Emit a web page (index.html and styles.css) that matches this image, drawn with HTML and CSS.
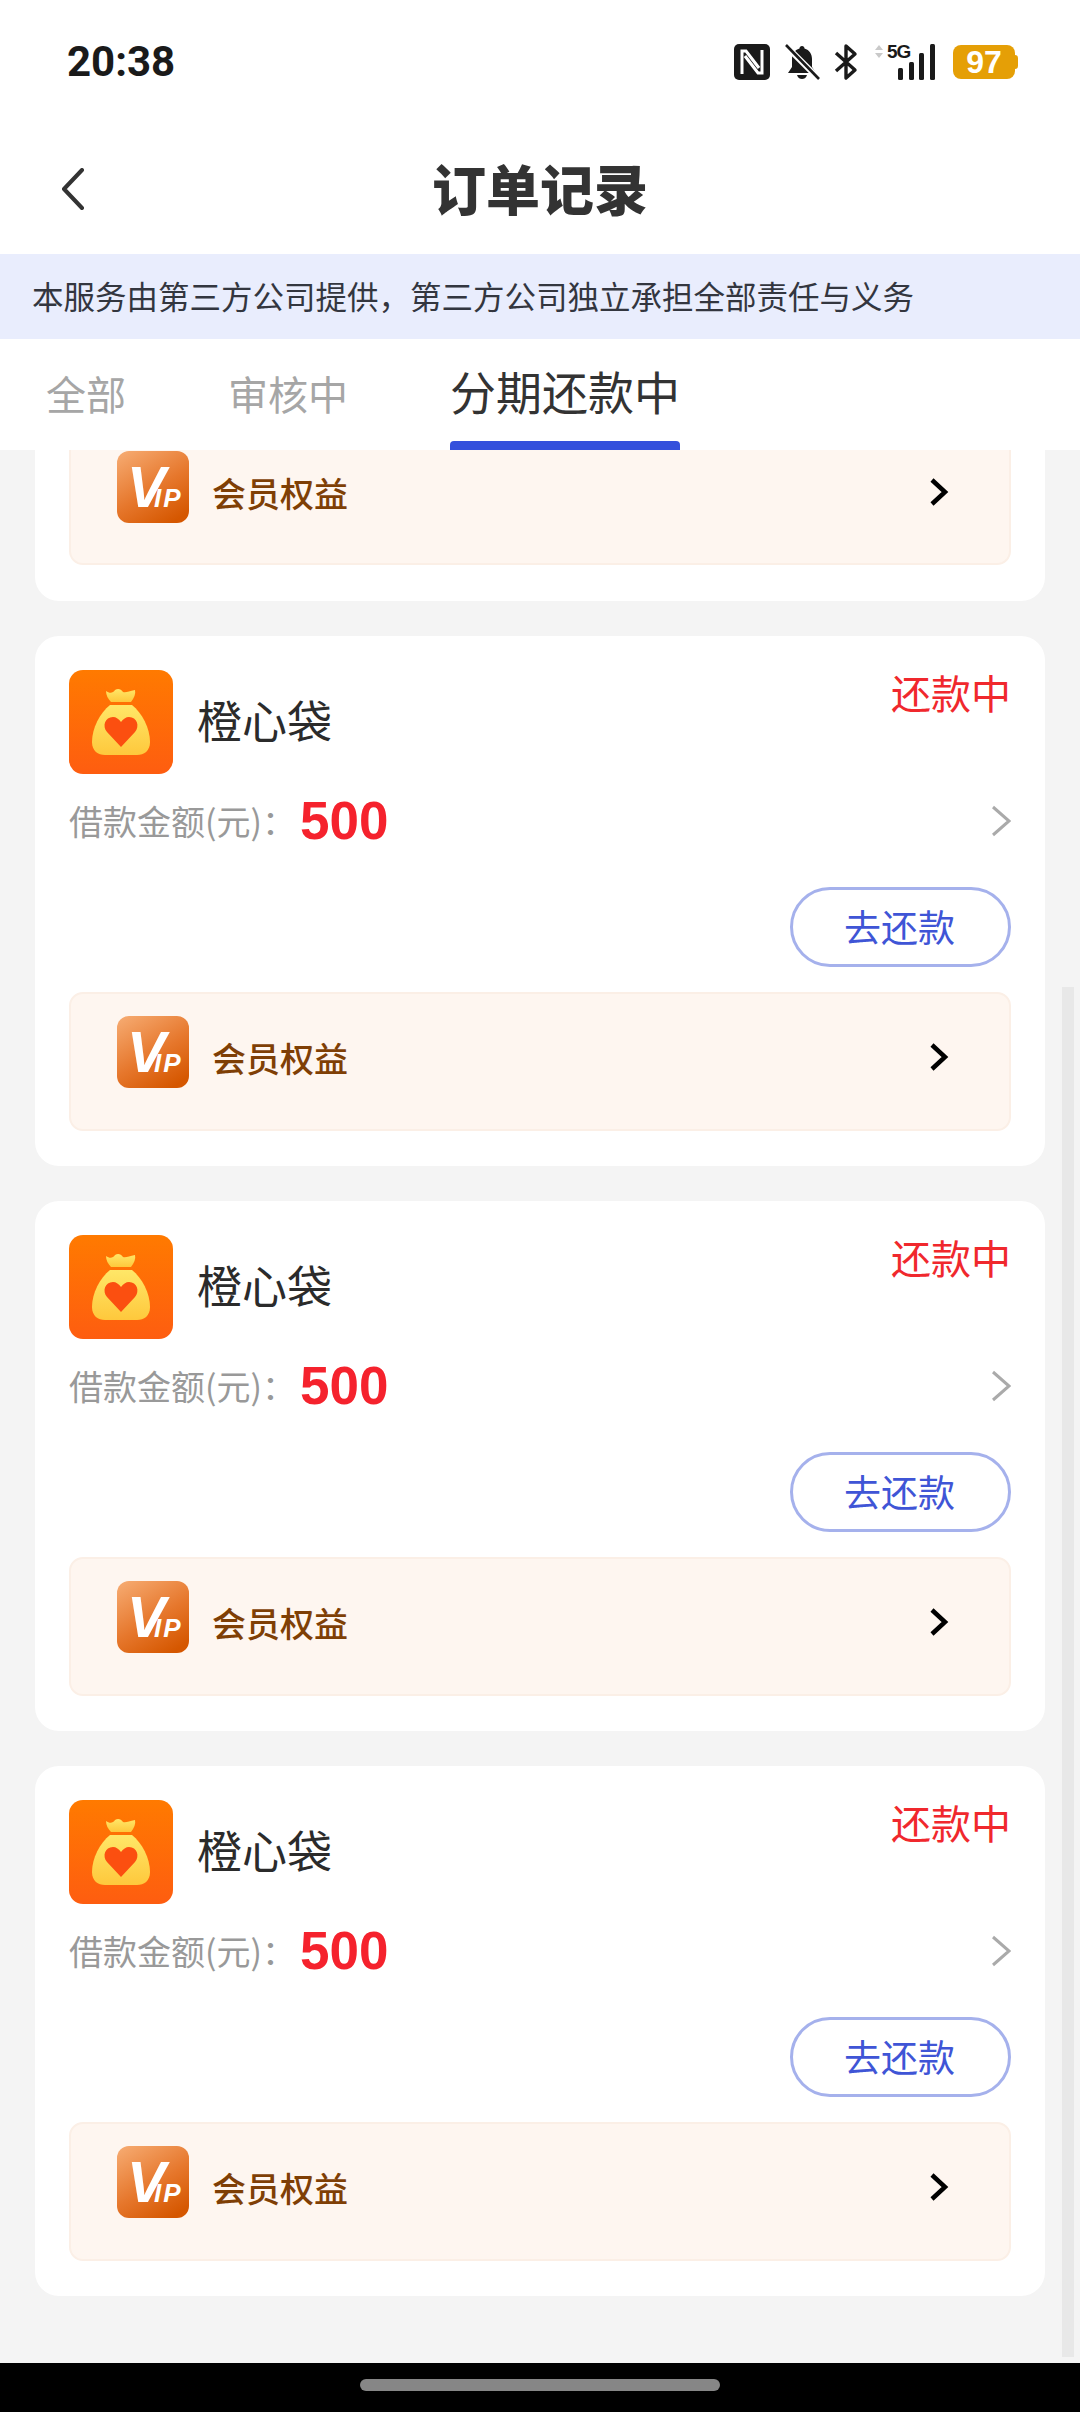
FILE: index.html
```html
<!DOCTYPE html>
<html lang="zh-CN">
  <head>
    <meta charset="UTF-8" />
    <meta name="viewport" content="width=device-width, initial-scale=1.0" />
    <title>订单记录</title>
    <link rel="stylesheet" href="styles.css">
  </head>
  <body>
    <svg class="sprite" width="0" height="0">
      <defs>
        <linearGradient id="bagBg" x1="0" y1="0" x2="0" y2="1">
          <stop offset="0" stop-color="#ff7a00" />
          <stop offset="1" stop-color="#fe5d10" />
        </linearGradient>
        <linearGradient id="bagBody" x1="0" y1="0" x2="0" y2="1">
          <stop offset="0" stop-color="#ffe768" />
          <stop offset="1" stop-color="#fec83c" />
        </linearGradient>
        <linearGradient id="vipBg" x1="0.15" y1="0" x2="0.75" y2="1">
          <stop offset="0" stop-color="#f5a76c" />
          <stop offset="0.55" stop-color="#e6772c" />
          <stop offset="1" stop-color="#d55700" />
        </linearGradient>
        <symbol id="bag" viewBox="0 0 104 104">
          <rect width="104" height="104" rx="14" fill="url(#bagBg)" />
          <path d="M37 21C41 24 44 23 46 20C49 18 52 19 54 22C57 23 60 21 66 20C67 24 65 28 62 32H42C39 29 37 25 37 21Z" fill="url(#bagBody)" />
          <path d="M41 35H63C73 43 81 58 81 72C81 81 75 85 68 85H36C29 85 23 81 23 72C23 58 31 43 41 35Z" fill="url(#bagBody)" />
          <path d="M52 77L38 62C33 56 36 47 44 47C47 47 50 49 52 52C54 49 57 47 60 47C68 47 71 56 66 62Z" fill="#fb4f10" />
        </symbol>
      </defs>
    </svg>

    <div class="app">
      <div class="status-bar">
        <span class="time">20:38</span>
        <div class="status-icons">
          <svg class="ic-nfc" width="36" height="36" viewBox="0 0 36 36">
            <rect width="36" height="36" rx="5" fill="#1a1a1a" />
            <path d="M8 30V7H12L25 24M28 6V29H24L11 12" fill="none" stroke="#fff" stroke-width="3" />
          </svg>
          <svg class="ic-bell" width="36" height="36" viewBox="0 0 36 36">
            <path d="M18 2C19.500 2 20.500 3 20.500 4.500C25.500 6 28 10 28 15V23L32 29H4L8 23V15C8 10 10.500 6 15.500 4.500C15.500 3 16.500 2 18 2Z" fill="#1a1a1a" />
            <path d="M13 31H23C22 34 20 35 18 35C16 35 14 34 13 31Z" fill="#1a1a1a" />
            <path d="M1 1L35 35" stroke="#fff" stroke-width="6" />
            <path d="M2 1L35 35" stroke="#1a1a1a" stroke-width="2.600" />
          </svg>
          <svg class="ic-bt" width="24" height="38" viewBox="0 0 24 38">
            <path d="M2 10L21 27L12 35V3L21 11L2 28" fill="none" stroke="#1a1a1a" stroke-width="3.400" stroke-linejoin="round" />
          </svg>
          <svg class="ic-signal" width="62" height="42" viewBox="0 -6 62 42">
            <path d="M5 1L9 6H1ZM5 14L1 9H9Z" fill="#c9c9c9" />
            <text class="net-label" x="13" y="14">5G</text>
            <rect x="24" y="24" width="5" height="12" rx="1.500" fill="#1a1a1a" />
            <rect x="35" y="18" width="5" height="18" rx="1.500" fill="#1a1a1a" />
            <rect x="45" y="9" width="5" height="27" rx="1.500" fill="#1a1a1a" />
            <rect x="56" y="0" width="5" height="36" rx="1.500" fill="#1a1a1a" />
          </svg>
          <div class="battery">97</div>
        </div>
      </div>

      <header class="title-bar">
        <svg class="back" width="24" height="42" viewBox="0 0 24 42">
          <path d="M21 2L3 21L21 40" fill="none" stroke="#333" stroke-width="4" stroke-linecap="round" stroke-linejoin="round" />
        </svg>
        <h1>订单记录</h1>
      </header>

      <p class="notice">本服务由第三方公司提供，第三方公司独立承担全部责任与义务</p>

      <nav class="tabs">
        <a class="tab">全部</a>
        <a class="tab">审核中</a>
        <a class="tab tab-active">分期还款中</a>
      </nav>

      <main class="list">
        <!-- scrolled: only the end of this card still shows under the tabs -->
        <section class="card card-cut">
          <div class="perk">
            <svg class="vip" width="72" height="72" viewBox="0 0 72 72">
              <rect width="72" height="72" rx="12" fill="url(#vipBg)" />
              <text class="vip-mark" x="10" y="56"><tspan class="vip-v">V</tspan><tspan class="vip-ip" x="37">IP</tspan></text>
            </svg>
            <span class="perk-name">会员权益</span>
            <svg class="go" width="20" height="30" viewBox="0 0 20 30"><path d="M3 3L16 15L3 27" /></svg>
          </div>
        </section>

        <section class="card">
          <div class="card-head">
            <svg class="bag" width="104" height="104"><use href="#bag" /></svg>
            <span class="name">橙心袋</span>
            <span class="state">还款中</span>
          </div>
          <div class="amount-row">
            <span class="amount-label">借款金额(元)：</span>
            <span class="amount">500</span>
            <svg class="more" width="20" height="32" viewBox="0 0 20 32"><path d="M2 2L18 16L2 30" /></svg>
          </div>
          <div class="actions"><button class="pay">去还款</button></div>
          <div class="perk">
            <svg class="vip" width="72" height="72" viewBox="0 0 72 72">
              <rect width="72" height="72" rx="12" fill="url(#vipBg)" />
              <text class="vip-mark" x="10" y="56"><tspan class="vip-v">V</tspan><tspan class="vip-ip" x="37">IP</tspan></text>
            </svg>
            <span class="perk-name">会员权益</span>
            <svg class="go" width="20" height="30" viewBox="0 0 20 30"><path d="M3 3L16 15L3 27" /></svg>
          </div>
        </section>

        <section class="card">
          <div class="card-head">
            <svg class="bag" width="104" height="104"><use href="#bag" /></svg>
            <span class="name">橙心袋</span>
            <span class="state">还款中</span>
          </div>
          <div class="amount-row">
            <span class="amount-label">借款金额(元)：</span>
            <span class="amount">500</span>
            <svg class="more" width="20" height="32" viewBox="0 0 20 32"><path d="M2 2L18 16L2 30" /></svg>
          </div>
          <div class="actions"><button class="pay">去还款</button></div>
          <div class="perk">
            <svg class="vip" width="72" height="72" viewBox="0 0 72 72">
              <rect width="72" height="72" rx="12" fill="url(#vipBg)" />
              <text class="vip-mark" x="10" y="56"><tspan class="vip-v">V</tspan><tspan class="vip-ip" x="37">IP</tspan></text>
            </svg>
            <span class="perk-name">会员权益</span>
            <svg class="go" width="20" height="30" viewBox="0 0 20 30"><path d="M3 3L16 15L3 27" /></svg>
          </div>
        </section>

        <section class="card">
          <div class="card-head">
            <svg class="bag" width="104" height="104"><use href="#bag" /></svg>
            <span class="name">橙心袋</span>
            <span class="state">还款中</span>
          </div>
          <div class="amount-row">
            <span class="amount-label">借款金额(元)：</span>
            <span class="amount">500</span>
            <svg class="more" width="20" height="32" viewBox="0 0 20 32"><path d="M2 2L18 16L2 30" /></svg>
          </div>
          <div class="actions"><button class="pay">去还款</button></div>
          <div class="perk">
            <svg class="vip" width="72" height="72" viewBox="0 0 72 72">
              <rect width="72" height="72" rx="12" fill="url(#vipBg)" />
              <text class="vip-mark" x="10" y="56"><tspan class="vip-v">V</tspan><tspan class="vip-ip" x="37">IP</tspan></text>
            </svg>
            <span class="perk-name">会员权益</span>
            <svg class="go" width="20" height="30" viewBox="0 0 20 30"><path d="M3 3L16 15L3 27" /></svg>
          </div>
        </section>

        <div class="scrollbar"></div>
      </main>

      <div class="home-bar"><span class="home-pill"></span></div>
    </div>
  </body>
</html>
```

FILE: styles.css
```css
* {
  box-sizing: border-box;
}

body {
  margin: 0;
  background: #f4f4f4;
  font-family: "Noto Sans CJK SC", "Noto Sans", sans-serif;
}

.sprite {
  position: absolute;
}

.app {
  display: flex;
  flex-direction: column;
  width: 1080px;
  height: 2412px;
  overflow: hidden;
}

.status-bar {
  display: flex;
  justify-content: space-between;
  align-items: center;
  height: 124px;
  padding: 0 65px 0 67px;
  background: #fff;
}

.time {
  font-family: Roboto, Inter, sans-serif;
  font-size: 42px;
  font-weight: 700;
  line-height: 1;
  color: #1a1a1a;
}

.status-icons {
  display: flex;
  align-items: center;
  gap: 14px;
}

.ic-signal {
  margin: -6px 0 0 2px;
}

.net-label {
  font-family: "Liberation Sans", sans-serif;
  font-size: 19px;
  font-weight: 700;
  letter-spacing: -1px;
  fill: #1a1a1a;
}

.battery {
  position: relative;
  width: 62px;
  height: 34px;
  margin-left: 3px;
  border-radius: 8px;
  background: #e59f06;
  color: #fff;
  font-family: "Liberation Sans", sans-serif;
  font-size: 32px;
  font-weight: 700;
  line-height: 34px;
  text-align: center;

  &::after {
    content: "";
    position: absolute;
    top: 10px;
    right: -3px;
    width: 3px;
    height: 14px;
    border-radius: 0 3px 3px 0;
    background: #e59f06;
  }
}

.title-bar {
  position: relative;
  display: flex;
  justify-content: center;
  align-items: center;
  height: 130px;
  padding-bottom: 4px;
  background: #fff;

  h1 {
    margin: 0;
    font-size: 54px;
    font-weight: 900;
    color: #333;
  }
}

.back {
  position: absolute;
  left: 61px;
  top: 44px;
}

.notice {
  height: 85px;
  margin: 0;
  padding-left: 32px;
  background: #e9edfd;
  color: #33363f;
  font-size: 31.5px;
  line-height: 83px;
  white-space: nowrap;
}

.tabs {
  display: flex;
  align-items: flex-end;
  gap: 102px;
  height: 111px;
  padding-left: 46px;
  background: #fff;
}

.tab {
  padding-bottom: 29px;
  color: #a6a6a6;
  font-size: 40px;
  line-height: 56px;
}

.tab-active {
  padding-bottom: 0;
  color: #333;
  font-size: 46px;
  line-height: 60px;

  &::after {
    content: "";
    display: block;
    height: 9px;
    margin-top: 21px;
    border-radius: 4px 4px 0 0;
    background: #3450dc;
  }
}

.list {
  position: relative;
  flex: 1;
  display: flex;
  flex-direction: column;
  gap: 35px;
  padding: 0 35px;
  overflow: hidden;
}

.card {
  flex: none;
  height: 530px;
  padding: 34px;
  border-radius: 24px;
  background: #fff;
}

.card-cut {
  height: 151px;
  padding-top: 0;
  border-radius: 0 0 24px 24px;

  .perk {
    height: 115px;
    margin-top: 0;
    padding-top: 1px;
    border-top: 0;
    border-radius: 0 0 14px 14px;
  }
}

.card-head {
  display: flex;
  align-items: flex-start;
  height: 104px;
}

.name {
  margin: 22px 0 0 24px;
  font-size: 45px;
  line-height: 56px;
  color: #2b2b2b;
}

.state {
  margin: -6px 0 0 auto;
  font-size: 40px;
  line-height: 56px;
  color: #f0282d;
}

.amount-row {
  display: flex;
  align-items: center;
  height: 60px;
  margin-top: 16px;
}

.amount-label {
  width: 231px;
  font-size: 34px;
  color: #999;
  white-space: nowrap;
}

.amount {
  font-family: "Liberation Sans", sans-serif;
  font-size: 53px;
  font-weight: 700;
  color: #f5222d;
}

.more {
  margin: 2px 0 0 auto;

  path {
    fill: none;
    stroke: #aaa;
    stroke-width: 3;
  }
}

.actions {
  display: flex;
  justify-content: flex-end;
  margin-top: 37px;
}

.pay {
  width: 221px;
  height: 80px;
  padding: 0 2px 3px 0;
  border: 3px solid #a5b1ec;
  border-radius: 40px;
  background: #fff;
  color: #3f55d6;
  font-family: inherit;
  font-size: 37px;
}

.perk {
  display: flex;
  align-items: flex-start;
  height: 139px;
  margin-top: 25px;
  padding: 22px 60px 0 46px;
  border: 2px solid #fbefe6;
  border-radius: 14px;
  background: #fef6f0;
}

.perk-name {
  margin: 19px 0 0 23px;
  font-size: 34px;
  font-weight: 500;
  line-height: 46px;
  color: #7f3f05;
}

.go {
  margin: 26px 0 0 auto;

  path {
    fill: none;
    stroke: #000;
    stroke-width: 4.500;
  }
}

.vip-mark {
  font-family: "Liberation Sans", sans-serif;
  font-style: italic;
  font-weight: 700;
  fill: #fff;
}

.vip-v {
  font-size: 58px;
}

.vip-ip {
  font-size: 26px;
  letter-spacing: 2px;
}

.scrollbar {
  position: absolute;
  top: 537px;
  right: 6px;
  width: 12px;
  height: 1370px;
  background: #e8e8e8;
}

.home-bar {
  display: flex;
  justify-content: center;
  height: 49px;
  padding-top: 16px;
  background: #000;
}

.home-pill {
  width: 360px;
  height: 12px;
  border-radius: 6px;
  background: #868686;
}
```
